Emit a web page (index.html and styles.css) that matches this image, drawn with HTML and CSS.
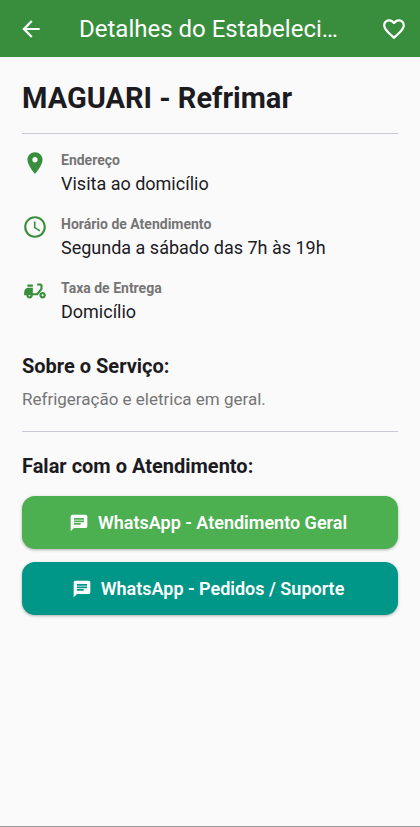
FILE: index.html
```html
<!DOCTYPE html>
<html lang="pt-BR">
<head>
<meta charset="utf-8">
<meta name="viewport" content="width=device-width, initial-scale=1">
<title>Detalhes do Estabelecimento</title>
<link rel="stylesheet" href="styles.css">
</head>
<body>
<header class="app-bar">
  <button class="icon-button" type="button" aria-label="Voltar">
    <svg class="icon" viewBox="0 0 24 24"><path d="M20 11H7.83l5.59-5.59L12 4l-8 8 8 8 1.41-1.41L7.83 13H20v-2z"/></svg>
  </button>
  <h1 class="app-title">Detalhes do Estabelecimento</h1>
  <button class="icon-button" type="button" aria-label="Favoritar">
    <svg class="icon" viewBox="0 0 24 24"><path d="M16.5 3c-1.74 0-3.41.81-4.5 2.09C10.91 3.81 9.24 3 7.5 3 4.42 3 2 5.42 2 8.5c0 3.78 3.4 6.86 8.55 11.54L12 21.35l1.45-1.32C18.6 15.36 22 12.28 22 8.5 22 5.42 19.58 3 16.5 3zm-4.4 15.55l-.1.1-.1-.1C7.14 14.24 4 11.39 4 8.5 4 6.5 5.5 5 7.5 5c1.54 0 3.04.99 3.57 2.36h1.87C13.46 5.99 14.96 5 16.5 5c2 0 3.5 1.5 3.5 3.5 0 2.89-3.14 5.74-7.9 10.05z"/></svg>
  </button>
</header>
<main class="content">
  <h2 class="name">MAGUARI - Refrimar</h2>
  <hr class="divider">
  <ul class="details">
    <li class="detail">
      <svg class="icon" viewBox="0 0 24 24"><path d="M12 2C8.13 2 5 5.13 5 9c0 5.25 7 13 7 13s7-7.75 7-13c0-3.87-3.13-7-7-7zm0 9.500c-1.380 0-2.500-1.120-2.500-2.500s1.120-2.500 2.500-2.500 2.500 1.120 2.500 2.500-1.120 2.500-2.500 2.500z"/></svg>
      <div><div class="label">Endereço</div><div class="value">Visita ao domicílio</div></div>
    </li>
    <li class="detail">
      <svg class="icon" viewBox="0 0 24 24"><path d="M11.99 2C6.47 2 2 6.48 2 12s4.470 10 9.990 10C17.520 22 22 17.520 22 12S17.520 2 11.990 2zM12 20c-4.420 0-8-3.580-8-8s3.580-8 8-8 8 3.580 8 8-3.580 8-8 8zm.5-13H11v6l5.250 3.150.75-1.230-4.500-2.670z"/></svg>
      <div><div class="label">Horário de Atendimento</div><div class="value">Segunda a sábado das 7h às 19h</div></div>
    </li>
    <li class="detail">
      <svg class="icon" viewBox="0 0 24 24"><path d="M19 7c0-1.100-.9-2-2-2h-3v2h3v2.650L13.520 14H10V9H6c-2.210 0-4 1.790-4 4v3h2c0 1.660 1.340 3 3 3s3-1.340 3-3h4.480L19 10.350V7zM7 17c-.55 0-1-.45-1-1h2c0 .55-.45 1-1 1zM5 6h5v2H5zM19 13c-1.660 0-3 1.340-3 3s1.340 3 3 3 3-1.340 3-3-1.340-3-3-3zm0 4c-.55 0-1-.45-1-1s.45-1 1-1 1 .45 1 1-.45 1-1 1z"/></svg>
      <div><div class="label">Taxa de Entrega</div><div class="value">Domicílio</div></div>
    </li>
  </ul>
  <section class="about">
    <h3 class="heading">Sobre o Serviço:</h3>
    <p class="description">Refrigeração e eletrica em geral.</p>
  </section>
  <hr class="divider">
  <section class="contact">
    <h3 class="heading">Falar com o Atendimento:</h3>
    <div class="actions">
      <button class="action action-general" type="button">
        <svg class="icon-chat" viewBox="0 0 24 24"><path d="M20 2H4c-1.100 0-1.990.9-1.990 2L2 22l4-4h14c1.100 0 2-.9 2-2V4c0-1.100-.9-2-2-2zM6 9h12v2H6V9zm8 5H6v-2h8v2zm4-6H6V6h12v2z"/></svg>
        WhatsApp - Atendimento Geral
      </button>
      <button class="action action-orders" type="button">
        <svg class="icon-chat" viewBox="0 0 24 24"><path d="M20 2H4c-1.100 0-1.990.9-1.990 2L2 22l4-4h14c1.100 0 2-.9 2-2V4c0-1.100-.9-2-2-2zM6 9h12v2H6V9zm8 5H6v-2h8v2zm4-6H6V6h12v2z"/></svg>
        WhatsApp - Pedidos / Suporte
      </button>
    </div>
  </section>
</main>
</body>
</html>
```
FILE: styles.css
```css
* {
  box-sizing: border-box;
}

body {
  display: flex;
  flex-direction: column;
  min-height: 100vh;
  margin: 0;
  border-bottom: 1px solid #9a9a9a;
  background: #fafafa;
  color: #1c1b1f;
  font-family: Roboto, "Liberation Sans", sans-serif;
}

h1, h2, h3, p, ul {
  margin: 0;
  padding: 0;
}

svg {
  display: block;
  flex: none;
  fill: currentColor;
}

.icon {
  width: 26px;
  height: 26px;
}

.icon-chat {
  width: 20px;
  height: 20px;
}

.app-bar {
  display: flex;
  align-items: center;
  height: 57px;
  background: #388e3c;
  color: #fff;
}

.icon-button {
  display: flex;
  flex: none;
  align-items: center;
  justify-content: center;
  width: 52px;
  height: 52px;
  padding: 0;
  border: 0;
  background: none;
  color: inherit;
}

.icon-button:first-child {
  width: 62px;
}

.app-title {
  flex: 1;
  margin: 0 17px;
  overflow: hidden;
  font-size: 24px;
  font-weight: 400;
  line-height: 32px;
  text-overflow: ellipsis;
  white-space: nowrap;
}

.content {
  padding: 22px;
}

.name {
  font-size: 29px;
  font-weight: 700;
  line-height: 38px;
}

.divider {
  height: 1px;
  margin: 16px 0;
  border: 0;
  background: #cac9d6;
}

.details {
  display: flex;
  flex-direction: column;
  gap: 16px;
  list-style: none;
}

.detail {
  display: flex;
  gap: 13px;
}

.detail .icon {
  color: #388e3c;
}

.label {
  color: #757575;
  font-size: 14px;
  font-weight: 700;
  line-height: 20px;
}

.value {
  font-size: 18px;
  line-height: 28px;
}

.about {
  margin: 26px 0 19px;
}

.heading {
  font-size: 20px;
  font-weight: 700;
  line-height: 28px;
}

.description {
  margin-top: 6px;
  color: #757575;
  font-size: 17px;
  line-height: 26px;
}

.contact {
  margin-top: 20px;
}

.actions {
  display: flex;
  flex-direction: column;
  gap: 13px;
  margin-top: 16px;
}

.action {
  display: flex;
  align-items: center;
  justify-content: center;
  gap: 9px;
  height: 53px;
  padding: 0 16px 0 12px;
  border: 0;
  border-radius: 13px;
  box-shadow: 0 1px 3px rgba(0, 0, 0, 0.3);
  color: #fff;
  font: 600 18px/24px Roboto, "Liberation Sans", sans-serif;
}

.action-general {
  background: #4caf50;
}

.action-orders {
  background: #009688;
}
```
